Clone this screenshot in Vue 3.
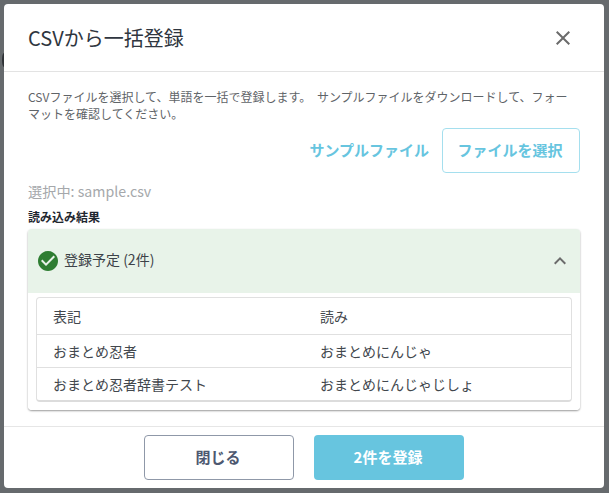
<script setup>
const rows = [
  { word: 'おまとめ忍者', reading: 'おまとめにんじゃ' },
  { word: 'おまとめ忍者辞書テスト', reading: 'おまとめにんじゃじしょ' },
]
</script>

<template>
  <div class="backdrop">
    <span class="behind"></span>
    <div class="modal">
      <header class="head">
        <h1 class="title">CSVから一括登録</h1>
        <svg class="close" width="24" height="24" viewBox="0 0 24 24"><path d="M19 6.41 17.59 5 12 10.59 6.41 5 5 6.41 10.59 12 5 17.59 6.41 19 12 13.41 17.59 19 19 17.59 13.41 12z" fill="#6b6b6b"/></svg>
      </header>
      <main class="body">
        <p class="desc">CSVファイルを選択して、単語を一括で登録します。 サンプルファイルをダウンロードして、フォーマットを確認してください。</p>
        <div class="actions">
          <span class="link">サンプルファイル</span>
          <span class="pick">ファイルを選択</span>
        </div>
        <div class="selected">選択中: sample.csv</div>
        <div class="label">読み込み結果</div>
        <section class="accordion">
          <div class="acc-head">
            <svg class="check" width="24" height="24" viewBox="0 0 24 24"><path d="M12 2C6.48 2 2 6.48 2 12s4.48 10 10 10 10-4.48 10-10S17.52 2 12 2zm-2 15-5-5 1.41-1.41L10 14.17l7.59-7.59L19 8l-9 9z" fill="#2e7d32"/></svg>
            <span class="acc-title">登録予定 (2件)</span>
            <svg class="chev" width="24" height="24" viewBox="0 0 24 24"><path d="M7.41 15.41 12 10.83l4.59 4.58L18 14l-6-6-6 6z" fill="#6b6b6b"/></svg>
          </div>
          <div class="acc-body">
            <div class="table">
              <div class="row row-head"><span>表記</span><span>読み</span></div>
              <div v-for="r in rows" :key="r.word" class="row"><span>{{ r.word }}</span><span>{{ r.reading }}</span></div>
            </div>
          </div>
        </section>
      </main>
      <footer class="foot">
        <span class="btn ghost">閉じる</span>
        <span class="btn primary">2件を登録</span>
      </footer>
    </div>
  </div>
</template>

<style>
html, body { margin: 0; background: #666a6d; }
</style>

<style scoped>
.backdrop {
  position: relative;
  width: 609px;
  height: 493px;
  box-sizing: border-box;
  padding: 4px 5px 5px 4px;
  background: #666a6d;
  font-family: "Noto Sans CJK JP", "Noto Sans", sans-serif;
  overflow: hidden;
}
.behind {
  position: absolute;
  left: 2px;
  top: 53px;
  width: 4px;
  height: 14px;
  border-radius: 50%;
  background: #2f3236;
}
.modal {
  position: relative;
  height: 484px;
  background: #fff;
  border-radius: 4px;
  display: flex;
  flex-direction: column;
  overflow: hidden;
}
.head {
  height: 68px;
  flex: none;
  box-sizing: border-box;
  padding: 0 29px 0 24px;
  border-bottom: 1px solid #e3e3e3;
  display: flex;
  align-items: center;
  justify-content: space-between;
}
.title {
  margin: 0;
  font-size: 20px;
  font-weight: 400;
  line-height: 28px;
  color: #2f3640;
}
.body {
  flex: 1;
  padding: 16px 24px 0;
}
.desc {
  margin: 0;
  padding-right: 6px;
  font-size: 12px;
  line-height: 17px;
  word-spacing: 3px;
  color: #5f6468;
}
.actions {
  margin-top: 6px;
  display: flex;
  justify-content: flex-end;
  align-items: center;
  gap: 13px;
}
.link, .pick {
  font-size: 15px;
  font-weight: 700;
  color: #67c5df;
}
.link {
  padding-bottom: 2px;
}
.pick {
  width: 138px;
  height: 45px;
  box-sizing: border-box;
  padding: 0 2px 2px 0;
  border: 1px solid #a5dfee;
  border-radius: 4px;
  display: flex;
  align-items: center;
  justify-content: center;
}
.selected {
  margin-top: 8px;
  font-size: 14.2px;
  line-height: 20px;
  color: #a5a8ab;
}
.label {
  margin-top: 8px;
  font-size: 12px;
  line-height: 16px;
  font-weight: 700;
  color: #1f2730;
}
.accordion {
  margin-top: 4px;
  border-radius: 4px;
  box-shadow: 0 1px 2px rgba(0, 0, 0, 0.4);
}
.acc-head {
  height: 64px;
  background: #e8f3e9;
  border-radius: 4px 4px 0 0;
  display: flex;
  align-items: center;
  padding: 0 8px;
  box-sizing: border-box;
  gap: 4px;
}
.acc-title {
  flex: 1;
  padding-bottom: 4px;
  font-size: 14px;
  color: #3c4248;
}
.acc-body {
  padding: 4px 8px 8px;
  background: #fff;
  border-radius: 0 0 4px 4px;
}
.table {
  border: 1px solid #e0e0e0;
  border-bottom: 2px solid #dcdcdc;
  border-radius: 4px;
}
.row {
  height: 33px;
  box-sizing: border-box;
  display: grid;
  grid-template-columns: 267px 1fr;
  align-items: center;
  padding: 0 16px;
  font-size: 14px;
  color: #42474d;
  border-top: 1px solid #e0e0e0;
}
.row-head {
  height: 36px;
  border-top: 0;
}
.foot {
  height: 62px;
  flex: none;
  box-sizing: border-box;
  border-top: 1px solid #e6e6e6;
  display: flex;
  justify-content: center;
  align-items: center;
  gap: 20px;
}
.btn {
  width: 150px;
  height: 45px;
  box-sizing: border-box;
  padding: 0 2px 2px 0;
  border-radius: 4px;
  display: flex;
  align-items: center;
  justify-content: center;
  font-size: 15px;
  font-weight: 700;
}
.ghost {
  border: 1px solid #8f98a8;
  color: #4d5870;
}
.primary {
  background: #67c5df;
  color: #fff;
}
</style>
